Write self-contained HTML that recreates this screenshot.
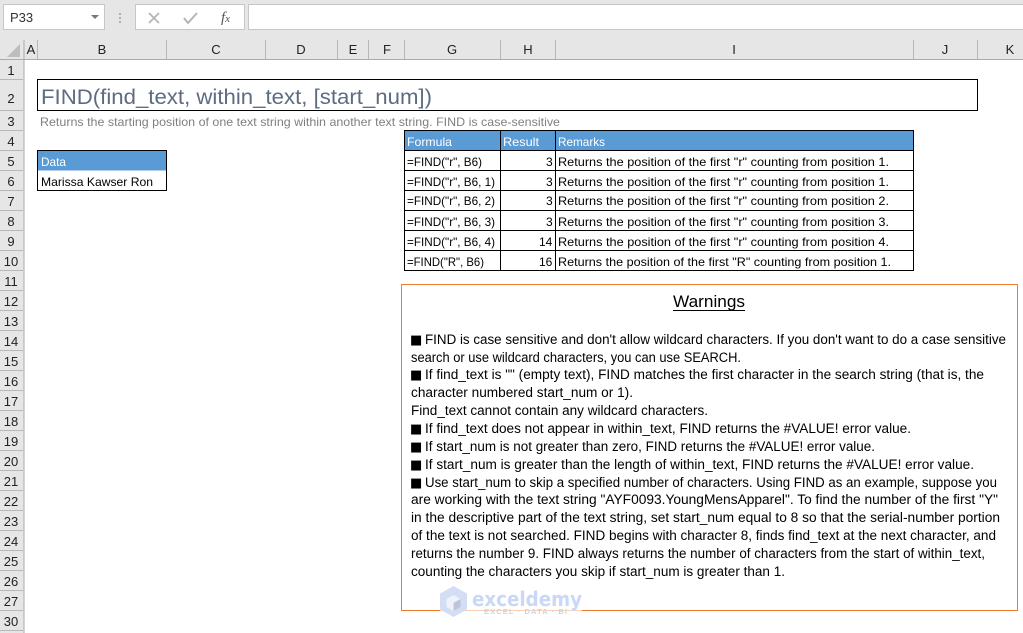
<!DOCTYPE html>
<html><head><meta charset="utf-8"><style>
html,body{margin:0;padding:0;background:#fff;width:1023px;height:633px;overflow:hidden}
svg{display:block;font-family:"Liberation Sans",sans-serif}
.h{font-size:13px;fill:#222;text-anchor:middle}
.t{font-size:12px;fill:#000}
.w{font-size:13.5px;fill:#000}
.s{font-family:"DejaVu Sans",sans-serif;font-size:13px;fill:#000}
.th{font-size:12px;fill:#fff}
</style></head><body>
<svg width="1023" height="633" viewBox="0 0 1023 633" xmlns="http://www.w3.org/2000/svg">
<rect width="1023" height="633" fill="#fff"/>
<rect width="1023" height="59.5" fill="#e6e6e6"/>
<rect x="0" y="59" width="24" height="574" fill="#e6e6e6"/>
<!-- formula bar -->
<rect x="3.5" y="4.5" width="101" height="25" fill="#fff" stroke="#c6c6c6"/>
<text x="10" y="22" font-size="13" fill="#333">P33</text>
<path d="M91 15h8l-4 4z" fill="#777"/>
<g fill="#b0b0b0"><rect x="119" y="13" width="2" height="2"/><rect x="119" y="17" width="2" height="2"/><rect x="119" y="21" width="2" height="2"/></g>
<rect x="135.500" y="4.500" width="109" height="25" fill="#fff" stroke="#c6c6c6"/>
<path d="M149 13l10 10M159 13l-10 10" stroke="#b5b5b5" stroke-width="1.800" fill="none"/>
<path d="M184 18l4 5 9-10" stroke="#b5b5b5" stroke-width="2" fill="none"/>
<text x="221" y="22" font-family="Liberation Serif" font-style="italic" font-size="15" fill="#555">f<tspan font-size="11">x</tspan></text>
<rect x="248.500" y="4.500" width="780" height="25" fill="#fff" stroke="#c6c6c6"/>
<!-- headers -->
<path d="M20 44v13h-13z" fill="#bdbdbd"/>
<rect x="0" y="59" width="1023" height="1" fill="#ababab"/>
<rect x="23.500" y="40" width="1" height="593" fill="#ababab"/>
<g fill="#b8b8b8">
<rect x="37" y="40" width="1" height="19"/><rect x="166" y="40" width="1" height="19"/><rect x="265" y="40" width="1" height="19"/><rect x="337" y="40" width="1" height="19"/><rect x="368" y="40" width="1" height="19"/><rect x="404" y="40" width="1" height="19"/><rect x="500" y="40" width="1" height="19"/><rect x="555" y="40" width="1" height="19"/><rect x="913" y="40" width="1" height="19"/><rect x="977" y="40" width="1" height="19"/>
<rect x="0" y="79" width="23" height="1"/><rect x="0" y="110" width="23" height="1"/><rect x="0" y="130" width="23" height="1"/><rect x="0" y="150" width="23" height="1"/><rect x="0" y="170" width="23" height="1"/><rect x="0" y="190" width="23" height="1"/><rect x="0" y="210" width="23" height="1"/><rect x="0" y="230" width="23" height="1"/><rect x="0" y="250" width="23" height="1"/><rect x="0" y="270" width="23" height="1"/><rect x="0" y="290" width="23" height="1"/><rect x="0" y="310" width="23" height="1"/><rect x="0" y="330" width="23" height="1"/><rect x="0" y="350" width="23" height="1"/><rect x="0" y="370" width="23" height="1"/><rect x="0" y="390" width="23" height="1"/><rect x="0" y="410" width="23" height="1"/><rect x="0" y="430" width="23" height="1"/><rect x="0" y="450" width="23" height="1"/><rect x="0" y="470" width="23" height="1"/><rect x="0" y="490" width="23" height="1"/><rect x="0" y="510" width="23" height="1"/><rect x="0" y="530" width="23" height="1"/><rect x="0" y="550" width="23" height="1"/><rect x="0" y="570" width="23" height="1"/><rect x="0" y="590" width="23" height="1"/><rect x="0" y="610" width="23" height="1"/><rect x="0" y="630" width="23" height="1"/>
</g>
<g class="h">
<text class="h" x="31" y="54">A</text><text class="h" x="102" y="54">B</text><text class="h" x="216" y="54">C</text><text class="h" x="301" y="54">D</text><text class="h" x="353" y="54">E</text><text class="h" x="387" y="54">F</text><text class="h" x="452" y="54">G</text><text class="h" x="528" y="54">H</text><text class="h" x="734" y="54">I</text><text class="h" x="945" y="54">J</text><text class="h" x="1010" y="54">K</text>
<text class="h" x="11" y="75">1</text><text class="h" x="11" y="103">2</text><text class="h" x="11" y="126">3</text><text class="h" x="11" y="146">4</text><text class="h" x="11" y="166">5</text><text class="h" x="11" y="186">6</text><text class="h" x="11" y="206">7</text><text class="h" x="11" y="226">8</text><text class="h" x="11" y="246">9</text><text class="h" x="11" y="266">10</text><text class="h" x="11" y="286">11</text><text class="h" x="11" y="306">12</text><text class="h" x="11" y="326">13</text><text class="h" x="11" y="346">14</text><text class="h" x="11" y="366">15</text><text class="h" x="11" y="386">16</text><text class="h" x="11" y="406">17</text><text class="h" x="11" y="426">18</text><text class="h" x="11" y="446">19</text><text class="h" x="11" y="466">20</text><text class="h" x="11" y="486">21</text><text class="h" x="11" y="506">22</text><text class="h" x="11" y="526">23</text><text class="h" x="11" y="546">24</text><text class="h" x="11" y="566">25</text><text class="h" x="11" y="586">26</text><text class="h" x="11" y="606">27</text>
</g>
<!-- title -->
<rect x="37.500" y="79.500" width="940" height="31" fill="#fff" stroke="#000"/>
<text x="41" y="104" font-size="21" fill="#5d6c82" textLength="391" lengthAdjust="spacingAndGlyphs">FIND(find_text, within_text, [start_num])</text>
<text x="40" y="126" font-size="12" fill="#808080" textLength="520" lengthAdjust="spacingAndGlyphs">Returns the starting position of one text string within another text string. FIND is case-sensitive</text>
<!-- data -->
<rect x="37.500" y="150.500" width="129" height="20" fill="#5b9bd5"/>
<rect x="37.500" y="150.500" width="129" height="40" fill="none" stroke="#000"/>
<text class="th" x="41" y="166" textLength="25" lengthAdjust="spacingAndGlyphs">Data</text>
<text class="t" x="41" y="186" textLength="112" lengthAdjust="spacingAndGlyphs">Marissa Kawser Ron</text>
<!-- table -->
<rect x="404.500" y="130.500" width="509" height="20" fill="#5b9bd5"/>
<g fill="none" stroke="#000"><rect x="404.500" y="130.500" width="509" height="140"/>
<path d="M404 150.500h510M404 170.500h510M404 190.500h510M404 210.500h510M404 230.500h510M404 250.500h510M500.500 130v140M555.500 130v140"/></g>
<text class="th" x="407" y="146" textLength="45" lengthAdjust="spacingAndGlyphs">Formula</text>
<text class="th" x="503" y="146" textLength="36" lengthAdjust="spacingAndGlyphs">Result</text>
<text class="th" x="558" y="146" textLength="47" lengthAdjust="spacingAndGlyphs">Remarks</text>
<g class="t">
<text class="t" x="407" y="166" textLength="75" lengthAdjust="spacingAndGlyphs">=FIND("r", B6)</text>
<text class="t" x="407" y="186" textLength="88" lengthAdjust="spacingAndGlyphs">=FIND("r", B6, 1)</text>
<text class="t" x="407" y="205" textLength="88" lengthAdjust="spacingAndGlyphs">=FIND("r", B6, 2)</text>
<text class="t" x="407" y="226" textLength="88" lengthAdjust="spacingAndGlyphs">=FIND("r", B6, 3)</text>
<text class="t" x="407" y="246" textLength="88" lengthAdjust="spacingAndGlyphs">=FIND("r", B6, 4)</text>
<text class="t" x="407" y="266" textLength="77" lengthAdjust="spacingAndGlyphs">=FIND("R", B6)</text>
<text class="t" x="546" y="166">3</text><text class="t" x="546" y="186">3</text><text class="t" x="546" y="205">3</text><text class="t" x="546" y="226">3</text>
<text class="t" x="539" y="246">14</text><text class="t" x="539" y="266">16</text>
<text class="t" x="558" y="166" textLength="331" lengthAdjust="spacingAndGlyphs">Returns the position of the first "r" counting from position 1.</text>
<text class="t" x="558" y="186" textLength="331" lengthAdjust="spacingAndGlyphs">Returns the position of the first "r" counting from position 1.</text>
<text class="t" x="558" y="205" textLength="331" lengthAdjust="spacingAndGlyphs">Returns the position of the first "r" counting from position 2.</text>
<text class="t" x="558" y="226" textLength="331" lengthAdjust="spacingAndGlyphs">Returns the position of the first "r" counting from position 3.</text>
<text class="t" x="558" y="246" textLength="331" lengthAdjust="spacingAndGlyphs">Returns the position of the first "r" counting from position 4.</text>
<text class="t" x="558" y="266" textLength="333" lengthAdjust="spacingAndGlyphs">Returns the position of the first "R" counting from position 1.</text>
</g>
<!-- warnings -->
<rect x="401.500" y="284.500" width="616" height="326" fill="#fff" stroke="#ed7d31"/>
<text x="673" y="307" font-size="17" fill="#000" textLength="72" lengthAdjust="spacingAndGlyphs">Warnings</text>
<rect x="673" y="310" width="72" height="1" fill="#000"/>
<text class="s" x="410" y="344">■</text><text class="w" x="425" y="344" textLength="581" lengthAdjust="spacingAndGlyphs">FIND is case sensitive and don't allow wildcard characters. If you don't want to do a case sensitive</text>
<text class="w" x="411" y="362" textLength="330" lengthAdjust="spacingAndGlyphs">search or use wildcard characters, you can use SEARCH.</text>
<text class="s" x="410" y="379">■</text><text class="w" x="425" y="379" textLength="559" lengthAdjust="spacingAndGlyphs">If find_text is "" (empty text), FIND matches the first character in the search string (that is, the</text>
<text class="w" x="411" y="397" textLength="222" lengthAdjust="spacingAndGlyphs">character numbered start_num or 1).</text>
<text class="w" x="411" y="415" textLength="297" lengthAdjust="spacingAndGlyphs">Find_text cannot contain any wildcard characters.</text>
<text class="s" x="410" y="433">■</text><text class="w" x="425" y="433" textLength="486" lengthAdjust="spacingAndGlyphs">If find_text does not appear in within_text, FIND returns the #VALUE! error value.</text>
<text class="s" x="410" y="451">■</text><text class="w" x="425" y="451" textLength="450" lengthAdjust="spacingAndGlyphs">If start_num is not greater than zero, FIND returns the #VALUE! error value.</text>
<text class="s" x="410" y="469">■</text><text class="w" x="425" y="469" textLength="549" lengthAdjust="spacingAndGlyphs">If start_num is greater than the length of within_text, FIND returns the #VALUE! error value.</text>
<text class="s" x="410" y="487">■</text><text class="w" x="425" y="487" textLength="572" lengthAdjust="spacingAndGlyphs">Use start_num to skip a specified number of characters. Using FIND as an example, suppose you</text>
<text class="w" x="411" y="504" textLength="587" lengthAdjust="spacingAndGlyphs">are working with the text string "AYF0093.YoungMensApparel". To find the number of the first "Y"</text>
<text class="w" x="411" y="522" textLength="589" lengthAdjust="spacingAndGlyphs">in the descriptive part of the text string, set start_num equal to 8 so that the serial-number portion</text>
<text class="w" x="411" y="540" textLength="585" lengthAdjust="spacingAndGlyphs">of the text is not searched. FIND begins with character 8, finds find_text at the next character, and</text>
<text class="w" x="411" y="558" textLength="574" lengthAdjust="spacingAndGlyphs">returns the number 9. FIND always returns the number of characters from the start of within_text,</text>
<text class="w" x="411" y="576" textLength="374" lengthAdjust="spacingAndGlyphs">counting the characters you skip if start_num is greater than 1.</text>
<!-- watermark -->
<rect x="440" y="610" width="142" height="1" fill="#fff" opacity=".65"/>
<g>
<path d="M453.500 586l13.500 7.500v16l-13.500 7.500-13.500-7.500v-16z" fill="#d3def5"/>
<path d="M453.500 595l7 4v8l-7 4-7-4v-8z" fill="#eef2fb"/>
<path d="M453.500 603l7-4v8l-7 4z" fill="#bcc6d8"/>
<text x="472" y="606" font-family="DejaVu Sans" font-weight="bold" font-size="20" fill="#c9d8f7" textLength="110" lengthAdjust="spacingAndGlyphs">exceldemy</text>
<text x="484" y="614" font-size="7.500" font-weight="bold" fill="#d0d3d8" textLength="83" lengthAdjust="spacing">EXCEL · DATA · BI</text>
</g>
<text class="h" x="11" y="626">30</text>
</svg>
</body></html>
